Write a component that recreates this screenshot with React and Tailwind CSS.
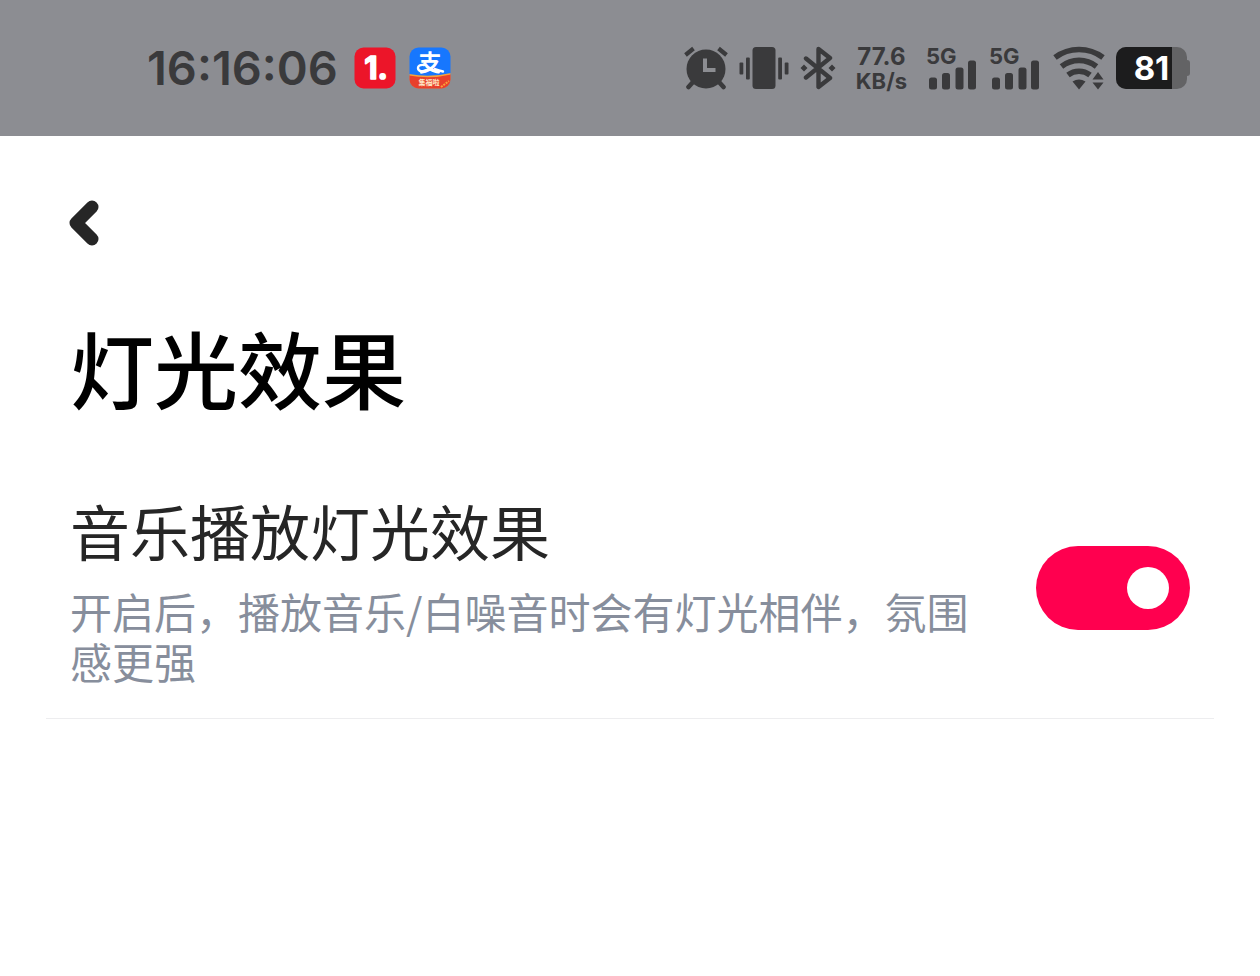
import { useState } from 'react';

function AlarmIcon() {
  return (
    <svg viewBox="0 0 44 44" className="w-11 h-11 shrink-0" aria-hidden="true">
      <g stroke="#3a3a3c" strokeLinecap="round">
        <path d="M9 36 4.500 41M35 36l4.500 5" strokeWidth="4.600" />
        <path d="M1.500 9 9.500 2.500M34.500 2.500l8 6.500" strokeWidth="4.200" strokeLinecap="butt" />
      </g>
      <circle cx="22" cy="23" r="19.500" fill="#3a3a3c" />
      <path d="M21 12.500v11.500H31.500" fill="none" stroke="#8c8d92" strokeWidth="4" />
    </svg>
  );
}

function VibrateIcon() {
  return (
    <svg viewBox="0 0 50 44" className="w-[50px] h-11 shrink-0" fill="#3a3a3c" aria-hidden="true">
      <rect x="13.500" y="1" width="23" height="42" rx="3.500" />
      <rect x="7" y="11.500" width="3.800" height="22" rx="1" />
      <rect x="0.500" y="16.500" width="3.800" height="12" rx="1" />
      <rect x="39.200" y="11.500" width="3.800" height="22" rx="1" />
      <rect x="45.700" y="16.500" width="3.800" height="12" rx="1" />
    </svg>
  );
}

function BluetoothIcon() {
  return (
    <svg viewBox="0 0 36 44" className="w-9 h-11 shrink-0" aria-hidden="true">
      <path
        d="M6 12.500 30 32 18.500 41V3L30 12 6 31.500"
        fill="none"
        stroke="#3a3a3c"
        strokeWidth="4.400"
        strokeLinejoin="round"
        strokeLinecap="round"
      />
      <path d="m4 18.500 3.500 3.500L4 25.500.5 22zM32 18.500l3.500 3.500-3.500 3.500-3.500-3.500z" fill="#3a3a3c" />
    </svg>
  );
}

function SignalIcon() {
  return (
    <svg viewBox="0 0 50 44" className="w-[50px] h-11 shrink-0 overflow-visible" fill="#3a3a3c" role="img" aria-label="5G">
      <text x="-1" y="18" className="text-[22px] font-bold">
        5G
      </text>
      <rect x="2" y="31.500" width="8" height="12" rx="2.500" />
      <rect x="15" y="27" width="8" height="16.500" rx="2.500" />
      <rect x="28.500" y="21.500" width="8" height="22" rx="2.500" />
      <rect x="41" y="14.500" width="8" height="29" rx="2.500" />
    </svg>
  );
}

function WifiIcon() {
  return (
    <svg viewBox="0 0 52 44" className="w-[52px] h-11 shrink-0" aria-hidden="true">
      <g fill="none" stroke="#3a3a3c" strokeWidth="5.600">
        <path d="M2 11.500a40 40 0 0 1 48 0" />
        <path d="M8.500 20.500a28 28 0 0 1 35 0" />
        <path d="M15 29a18 18 0 0 1 22 0" />
      </g>
      <path d="M19.500 35.500q6.500-4 13 0L26 43.500z" fill="#3a3a3c" />
      <path d="m45 26 5.500 7.500h-11zM45 43.500l5.500-7h-11z" fill="#3a3a3c" />
    </svg>
  );
}

function Battery({ level }) {
  return (
    <div className="flex items-center shrink-0">
      <div className="relative w-[71px] h-[42px] rounded-[10px] bg-[#636365]">
        <div className="h-full rounded-l-[10px] bg-[#1c1c1d]" style={{ width: `${level - 2}%` }} />
        <span className="absolute inset-0 flex items-center justify-center text-[33px] leading-[42px] font-bold text-white">
          {level}
        </span>
      </div>
      <div className="w-[3px] h-4 rounded-r bg-[#636365]" />
    </div>
  );
}

function NewsAppIcon() {
  return (
    <svg viewBox="0 0 42 42" className="w-[42px] h-[42px]" role="img" aria-label="1.">
      <rect x="0.500" y="0.500" width="41" height="41" rx="9" fill="#ec1529" />
      <text
        x="22"
        y="32"
        textAnchor="middle"
        fill="#fff"
        stroke="#fff"
        strokeWidth="1.500"
        strokeLinejoin="round"
        className="text-[31px] font-bold"
      >
        1.
      </text>
    </svg>
  );
}

function PayAppIcon() {
  return (
    <svg viewBox="0 0 42 42" className="w-[42px] h-[42px]" role="img" aria-label="支">
      <defs>
        <clipPath id="pay-clip">
          <rect x="0.500" y="0.500" width="41" height="41" rx="9" />
        </clipPath>
      </defs>
      <g clipPath="url(#pay-clip)">
        <rect width="42" height="42" fill="#1777fe" />
        <text x="21" y="24" textAnchor="middle" fill="#fff" className="text-[23px] font-bold">
          支
        </text>
        <path
          d="M15 18c-4-.5-6 1-6 3 0 3.500 5 4 8.500 2M26 22c3 1.200 5 1.800 8 2.500"
          fill="none"
          stroke="#fff"
          strokeWidth="2.400"
          strokeLinecap="round"
        />
        <path d="M0 27q21 4 42-1v16H0z" fill="#f9a13a" />
        <path d="M0 28.500q21 4 42-1V42H0z" fill="#e8402c" />
        <text x="20" y="38" textAnchor="middle" fill="#ffe9c8" className="text-[7px] font-bold">
          集福啦
        </text>
        <path d="m32 40 8-6" stroke="#f9a13a" strokeWidth="2" strokeDasharray="2 1" />
      </g>
    </svg>
  );
}

function StatusBar() {
  return (
    <header className="h-[136px] pl-[147px] pr-[70px] flex items-center justify-between bg-[#8c8d92] text-[#3a3a3c] font-['Inter','Noto_Sans_CJK_SC',sans-serif]">
      <div className="flex items-center">
        <time className="text-[47px] leading-[50px] font-semibold">16:16:06</time>
        <div className="flex items-center gap-[13px] ml-4">
          <NewsAppIcon />
          <PayAppIcon />
        </div>
      </div>
      <div className="flex items-center">
        <div className="flex items-center gap-[11px]">
          <AlarmIcon />
          <VibrateIcon />
          <BluetoothIcon />
        </div>
        <div className="flex flex-col items-center ml-5 pt-[2px] font-bold">
          <span className="text-[24px] leading-6">77.6</span>
          <span className="text-[22px] leading-6">KB/s</span>
        </div>
        <div className="flex items-center gap-[13px] ml-5">
          <SignalIcon />
          <SignalIcon />
          <WifiIcon />
        </div>
        <div className="ml-[11px]">
          <Battery level={81} />
        </div>
      </div>
    </header>
  );
}

function Switch({ id, checked, onChange }) {
  return (
    <span className="relative shrink-0 w-[154px] h-[84px]">
      <input
        id={id}
        type="checkbox"
        role="switch"
        checked={checked}
        onChange={(e) => onChange(e.target.checked)}
        className="peer appearance-none block w-full h-full rounded-full bg-gray-300 checked:bg-[#ff004f] cursor-pointer transition-colors"
      />
      <span className="absolute top-[21px] left-[21px] w-[42px] h-[42px] rounded-full bg-white pointer-events-none peer-checked:left-auto peer-checked:right-[21px]" />
    </span>
  );
}

export default function App() {
  const [lightOn, setLightOn] = useState(true);

  return (
    <div lang="zh-CN" className="min-h-screen bg-white font-['Noto_Sans_CJK_SC',sans-serif]">
      <StatusBar />

      <main className="px-[46px] pt-16">
        <button type="button" aria-label="返回" className="block ml-5 cursor-pointer">
          <svg viewBox="0 0 36 46" className="w-9 h-[46px]" aria-hidden="true">
            <path
              d="M26 7 10 23l16 16"
              fill="none"
              stroke="#262626"
              strokeWidth="13"
              strokeLinecap="round"
              strokeLinejoin="round"
            />
          </svg>
        </button>

        <h1 className="mt-[73px] px-6 text-[84px] leading-24 font-medium text-black">灯光效果</h1>

        <section className="mt-[75px] px-6 pb-8 flex items-center justify-between gap-10 border-b border-[#ededef]">
          <div className="flex-1">
            <label htmlFor="music-light" className="block text-[60px] leading-20 text-[#262626]">
              音乐播放灯光效果
            </label>
            <p className="mt-4 text-[42px] leading-[50px] text-[#878e9c]">
              开启后，播放音乐/白噪音时会有灯光相伴，氛围感更强
            </p>
          </div>
          <Switch id="music-light" checked={lightOn} onChange={setLightOn} />
        </section>
      </main>
    </div>
  );
}
